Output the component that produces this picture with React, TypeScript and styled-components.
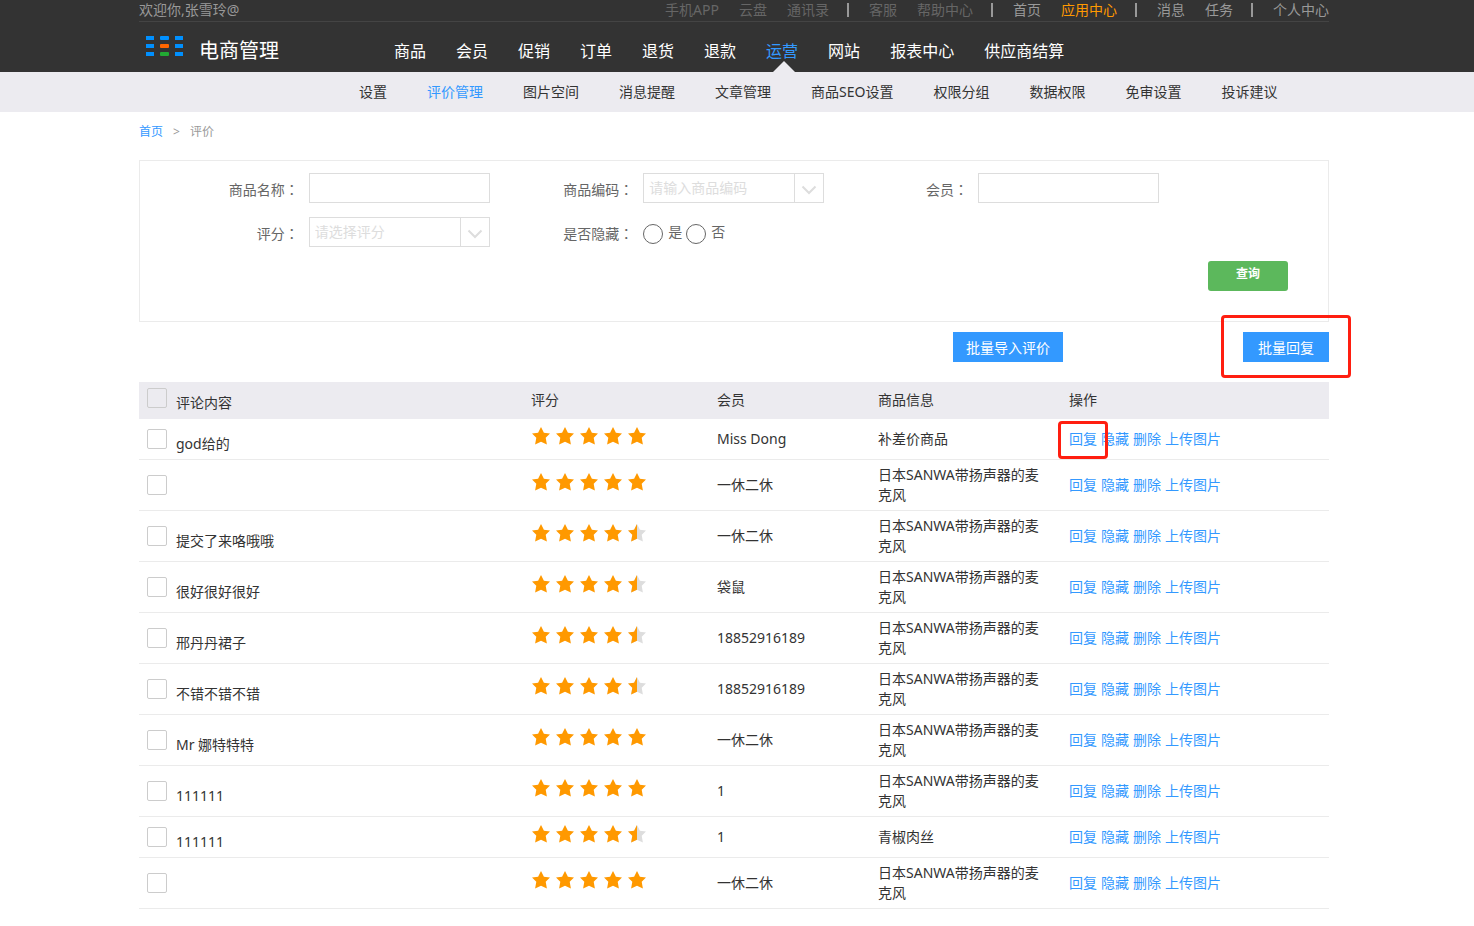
import React from "react";
import styled, { createGlobalStyle, css } from "styled-components";

const blue = "#3399ff";
const orange = "#ff9900";
const pale = "#ecebf0";
const line = "#ebebeb";
const fieldLine = "#dddddd";

const GlobalStyle = createGlobalStyle`
  *, *::before, *::after { box-sizing: border-box; }
  body {
    margin: 0;
    background: #fff;
    color: #333;
    font: 14px/20px "Noto Sans", "Noto Sans CJK SC", sans-serif;
  }
  button, input, select { font: inherit; color: inherit; }
  a { color: inherit; text-decoration: none; }
`;

const Band = styled.div`
  padding-right: 6px;
`;

const Container = styled.div`
  max-width: 1190px;
  margin: 0 auto;
`;

const Header = styled(Band).attrs({ as: "header" })`
  background: #333;
`;

const TopBar = styled(Container)`
  display: flex;
  justify-content: space-between;
  height: 22px;
  border-bottom: 1px solid #444;
  color: #999;
`;

const TopLinks = styled.nav`
  display: flex;
  gap: 20px;
`;

const TopLink = styled.a<{ $tone?: "dim" | "hot" }>`
  color: ${({ $tone }) => ($tone === "dim" ? "#666" : $tone === "hot" ? orange : "#999")};
`;

const TopDivider = styled.span`
  width: 2px;
  height: 14px;
  margin: 3px 0 0 -2px;
  background: #999;
`;

const Masthead = styled(Container)`
  display: flex;
  height: 50px;
`;

const Brand = styled.a`
  display: flex;
  flex: none;
  width: 255px;
  padding: 14px 0 0 7px;
  gap: 15px;
  color: #fff;
  font-size: 20px;
  line-height: 30px;
`;

const MainNav = styled.nav`
  display: flex;
  gap: 30px;
  font-size: 16px;
  line-height: 58px;
  white-space: nowrap;
`;

const MainLink = styled.a<{ $active?: boolean }>`
  position: relative;
  height: 50px;
  color: ${({ $active }) => ($active ? blue : "#fff")};
  ${({ $active }) =>
    $active &&
    css`
      &::after {
        content: "";
        position: absolute;
        left: 7px;
        bottom: 0;
        border: 11px solid transparent;
        border-top: 0;
        border-bottom-color: ${pale};
      }
    `}
`;

const SubBand = styled(Band)`
  background: ${pale};
`;

const SubNav = styled(Container).attrs({ as: "nav" })`
  display: flex;
  gap: 40px;
  padding-left: 220px;
  line-height: 40px;
  white-space: nowrap;
`;

const SubLink = styled.a<{ $active?: boolean }>`
  color: ${({ $active }) => ($active ? blue : "#333")};
`;

const Crumbs = styled.nav`
  display: flex;
  gap: 10px;
  height: 48px;
  color: #999;
  font-size: 12px;
  line-height: 40px;
`;

const CrumbLink = styled.a`
  color: ${blue};
`;

const SearchPanel = styled.form`
  padding: 12px 40px 30px 15px;
  border: 1px solid ${line};
  color: #666;
`;

const Fields = styled.div`
  display: grid;
  grid-template-columns: repeat(3, 1fr);
  row-gap: 14px;
  margin-right: 129px;
`;

const Field = styled.div`
  display: grid;
  grid-template: 30px / 1fr 181px;
  column-gap: 10px;
`;

const FieldName = styled.label`
  text-align: right;
  line-height: 32px;
`;

const Colon = styled.span`
  font-family: "Noto Sans CJK TC", sans-serif;
`;

const TextInput = styled.input`
  width: 100%;
  padding: 0 5px;
  border: 1px solid ${fieldLine};
  background: #fff;
  outline: none;
`;

const Combo = styled.div`
  display: flex;
  border: 1px solid ${fieldLine};
`;

const comboPart = css`
  flex: 1;
  min-width: 0;
  padding: 0 5px;
  border: 0;
  background: none;
  outline: none;
`;

const ComboInput = styled.input`
  ${comboPart}
  &::placeholder { color: ${fieldLine}; opacity: 1; }
`;

const ComboSelect = styled.select`
  ${comboPart}
  appearance: none;
  color: ${fieldLine};
`;

const ComboButton = styled.button`
  display: flex;
  align-items: center;
  justify-content: center;
  width: 29px;
  padding: 3px 0 0;
  border: 0;
  border-left: 1px solid ${fieldLine};
  background: none;
`;

const Choices = styled.div`
  display: flex;
  gap: 4px;
`;

const Choice = styled.label`
  display: flex;
  gap: 5px;
  line-height: 30px;
`;

const Radio = styled.input.attrs({ type: "radio" })`
  appearance: none;
  width: 20px;
  height: 20px;
  margin: 7px 0 0;
  border: 1px solid #666;
  border-radius: 50%;
  &:checked { box-shadow: inset 0 0 0 5px #fff; background: ${blue}; }
`;

const SearchRow = styled.div`
  display: flex;
  justify-content: flex-end;
  margin-top: 14px;
`;

const SearchButton = styled.button`
  width: 80px;
  height: 30px;
  padding: 0 0 4px;
  border: 0;
  border-radius: 3px;
  background: #5cb85c;
  color: #fff;
  font-size: 12px;
  font-weight: 700;
`;

const Actions = styled.div`
  display: flex;
  justify-content: flex-end;
  gap: 180px;
  padding: 10px 0 20px;
`;

const ActionButton = styled.button<{ $wide?: boolean }>`
  width: ${({ $wide }) => ($wide ? 110 : 86)}px;
  height: 30px;
  padding: 1px 0 0;
  border: 0;
  background: ${blue};
  color: #fff;
`;

const Marked = styled.span<{ $inset: string }>`
  position: relative;
  display: inline-flex;
  &::after {
    content: "";
    position: absolute;
    inset: ${({ $inset }) => $inset};
    border: 3px solid #ff1e10;
    border-radius: 4px;
    pointer-events: none;
  }
`;

const Table = styled.table`
  width: 100%;
  table-layout: fixed;
  border-collapse: separate;
  border-spacing: 0;
`;

const Column = styled.col<{ $width?: number }>`
  width: ${({ $width }) => ($width ? `${$width}px` : "auto")};
`;

const HeadCell = styled.th`
  height: 37px;
  padding: 0 8px 1px;
  background: ${pale};
  font-weight: 400;
  text-align: left;
`;

const Cell = styled.td`
  height: 41px;
  padding: 5px 16px 5px 8px;
  border-bottom: 1px solid ${line};
`;

const CheckLine = styled.label<{ $head?: boolean }>`
  display: flex;
  align-items: center;
  gap: 9px;
  height: 20px;
  margin-bottom: ${({ $head }) => ($head ? 4 : 0)}px;
`;

const CheckText = styled.span`
  padding-top: 9px;
`;

const Checkbox = styled.input.attrs({ type: "checkbox" })`
  appearance: none;
  flex: none;
  width: 20px;
  height: 20px;
  margin: 0;
  border: 1px solid #ccc;
  border-radius: 2px;
  &:checked { background: ${blue}; }
`;

const Stars = styled.div`
  display: flex;
  gap: 6px;
  padding: 0 0 6px 1px;
`;

const RowLinks = styled.div`
  display: flex;
  gap: 4px;
  color: ${blue};
`;

function Logo() {
  const side = "#0090ff";
  const middle = [side, "#ff6600", "#22aa33"];
  return (
    <svg width="38" height="20" viewBox="0 0 38 20" aria-hidden="true">
      {middle.map((center, i) => (
        <g key={i}>
          <rect x="0" y={i * 8} width="8" height="4" fill={side} />
          <rect x="14" y={i * 8} width="9" height="4" rx="1" fill={center} />
          <rect x="29" y={i * 8} width="8" height="4" fill={side} />
        </g>
      ))}
    </svg>
  );
}

function Chevron() {
  return (
    <svg width="16" height="10" viewBox="0 0 16 10" fill="none" stroke={fieldLine} strokeWidth="2" aria-hidden="true">
      <path d="M1.5 1.5 8 8l6.500-6.500" />
    </svg>
  );
}

const starPath = "M9 0l2.900 5.700 6.100.9-4.300 4.200 1.200 6.700L9 14.700l-5.900 2.800 1.200-6.700L0 6.600l6.100-.9z";
const halfStarPath = "M9 0v14.700l-5.900 2.800 1.200-6.700L0 6.600l6.100-.9z";

function Star({ half }: { half?: boolean }) {
  return (
    <svg width="18" height="18" viewBox="0 0 18 18" aria-hidden="true">
      <path d={starPath} fill={half ? "#dddddd" : orange} />
      {half && <path d={halfStarPath} fill={orange} />}
    </svg>
  );
}

type TopItem = { text: string; tone?: "dim" | "hot" } | null;

const topItems: TopItem[] = [
  { text: "手机APP", tone: "dim" },
  { text: "云盘", tone: "dim" },
  { text: "通讯录", tone: "dim" },
  null,
  { text: "客服", tone: "dim" },
  { text: "帮助中心", tone: "dim" },
  null,
  { text: "首页" },
  { text: "应用中心", tone: "hot" },
  null,
  { text: "消息" },
  { text: "任务" },
  null,
  { text: "个人中心" },
];

const mainItems = ["商品", "会员", "促销", "订单", "退货", "退款", "运营", "网站", "报表中心", "供应商结算"];
const subItems = ["设置", "评价管理", "图片空间", "消息提醒", "文章管理", "商品SEO设置", "权限分组", "数据权限", "免审设置", "投诉建议"];

const mic = "日本SANWA带扬声器的麦克风";
const reviews = [
  { text: "god给的", score: 5, member: "Miss Dong", product: "补差价商品", marked: true },
  { text: "", score: 5, member: "一休二休", product: mic },
  { text: "提交了来咯哦哦", score: 4.5, member: "一休二休", product: mic },
  { text: "很好很好很好", score: 4.5, member: "袋鼠", product: mic },
  { text: "邢丹丹裙子", score: 4.5, member: "18852916189", product: mic },
  { text: "不错不错不错", score: 4.5, member: "18852916189", product: mic },
  { text: "Mr 娜特特特", score: 5, member: "一休二休", product: mic },
  { text: "111111", score: 5, member: "1", product: mic },
  { text: "111111", score: 4.5, member: "1", product: "青椒肉丝" },
  { text: "", score: 5, member: "一休二休", product: mic },
];

export default function App() {
  return (
    <>
      <GlobalStyle />
      <Header>
        <TopBar>
          <span>欢迎你,张雪玲@</span>
          <TopLinks>
            {topItems.map((item, i) =>
              item ? (
                <TopLink key={i} href="#" $tone={item.tone}>{item.text}</TopLink>
              ) : (
                <TopDivider key={i} />
              )
            )}
          </TopLinks>
        </TopBar>
        <Masthead>
          <Brand href="#">
            <Logo />
            <span>电商管理</span>
          </Brand>
          <MainNav>
            {mainItems.map((text) => (
              <MainLink key={text} href="#" $active={text === "运营"}>{text}</MainLink>
            ))}
          </MainNav>
        </Masthead>
      </Header>
      <SubBand>
        <SubNav>
          {subItems.map((text) => (
            <SubLink key={text} href="#" $active={text === "评价管理"}>{text}</SubLink>
          ))}
        </SubNav>
      </SubBand>
      <Band as="main">
        <Container>
          <Crumbs>
            <CrumbLink href="#">首页</CrumbLink>
            <span>&gt;</span>
            <span>评价</span>
          </Crumbs>
          <SearchPanel onSubmit={(e) => e.preventDefault()}>
            <Fields>
              <Field>
                <FieldName htmlFor="name">商品名称<Colon>：</Colon></FieldName>
                <TextInput id="name" type="text" />
              </Field>
              <Field>
                <FieldName htmlFor="code">商品编码<Colon>：</Colon></FieldName>
                <Combo>
                  <ComboInput id="code" type="text" placeholder="请输入商品编码" />
                  <ComboButton type="button" aria-label="展开商品编码"><Chevron /></ComboButton>
                </Combo>
              </Field>
              <Field>
                <FieldName htmlFor="member">会员<Colon>：</Colon></FieldName>
                <TextInput id="member" type="text" />
              </Field>
              <Field>
                <FieldName htmlFor="score">评分<Colon>：</Colon></FieldName>
                <Combo>
                  <ComboSelect id="score" defaultValue="">
                    <option value="">请选择评分</option>
                  </ComboSelect>
                  <ComboButton type="button" aria-label="展开评分"><Chevron /></ComboButton>
                </Combo>
              </Field>
              <Field role="radiogroup" aria-labelledby="hidden-label">
                <FieldName as="span" id="hidden-label">是否隐藏<Colon>：</Colon></FieldName>
                <Choices>
                  <Choice><Radio name="hidden" value="yes" />是</Choice>
                  <Choice><Radio name="hidden" value="no" />否</Choice>
                </Choices>
              </Field>
            </Fields>
            <SearchRow>
              <SearchButton type="submit">查询</SearchButton>
            </SearchRow>
          </SearchPanel>
          <Actions>
            <ActionButton type="button" $wide>批量导入评价</ActionButton>
            <Marked $inset="-17px -22px -16px">
              <ActionButton type="button">批量回复</ActionButton>
            </Marked>
          </Actions>
          <Table>
            <colgroup>
              <Column $width={384} />
              <Column $width={186} />
              <Column $width={161} />
              <Column $width={191} />
              <Column />
            </colgroup>
            <thead>
              <tr>
                <HeadCell>
                  <CheckLine $head>
                    <Checkbox />
                    <CheckText>评论内容</CheckText>
                  </CheckLine>
                </HeadCell>
                <HeadCell>评分</HeadCell>
                <HeadCell>会员</HeadCell>
                <HeadCell>商品信息</HeadCell>
                <HeadCell>操作</HeadCell>
              </tr>
            </thead>
            <tbody>
              {reviews.map((r, i) => (
                <tr key={i}>
                  <Cell>
                    <CheckLine>
                      <Checkbox aria-label={r.text || "选择评论"} />
                      <CheckText>{r.text}</CheckText>
                    </CheckLine>
                  </Cell>
                  <Cell>
                    <Stars role="img" aria-label={`${r.score}`}>
                      {[1, 2, 3, 4, 5].map((n) => (
                        <Star key={n} half={n > r.score} />
                      ))}
                    </Stars>
                  </Cell>
                  <Cell>{r.member}</Cell>
                  <Cell>{r.product}</Cell>
                  <Cell>
                    <RowLinks>
                      {r.marked ? (
                        <Marked $inset="-8px -11px -10px"><a href="#">回复</a></Marked>
                      ) : (
                        <a href="#">回复</a>
                      )}
                      <a href="#">隐藏</a>
                      <a href="#">删除</a>
                      <a href="#">上传图片</a>
                    </RowLinks>
                  </Cell>
                </tr>
              ))}
            </tbody>
          </Table>
        </Container>
      </Band>
    </>
  );
}
